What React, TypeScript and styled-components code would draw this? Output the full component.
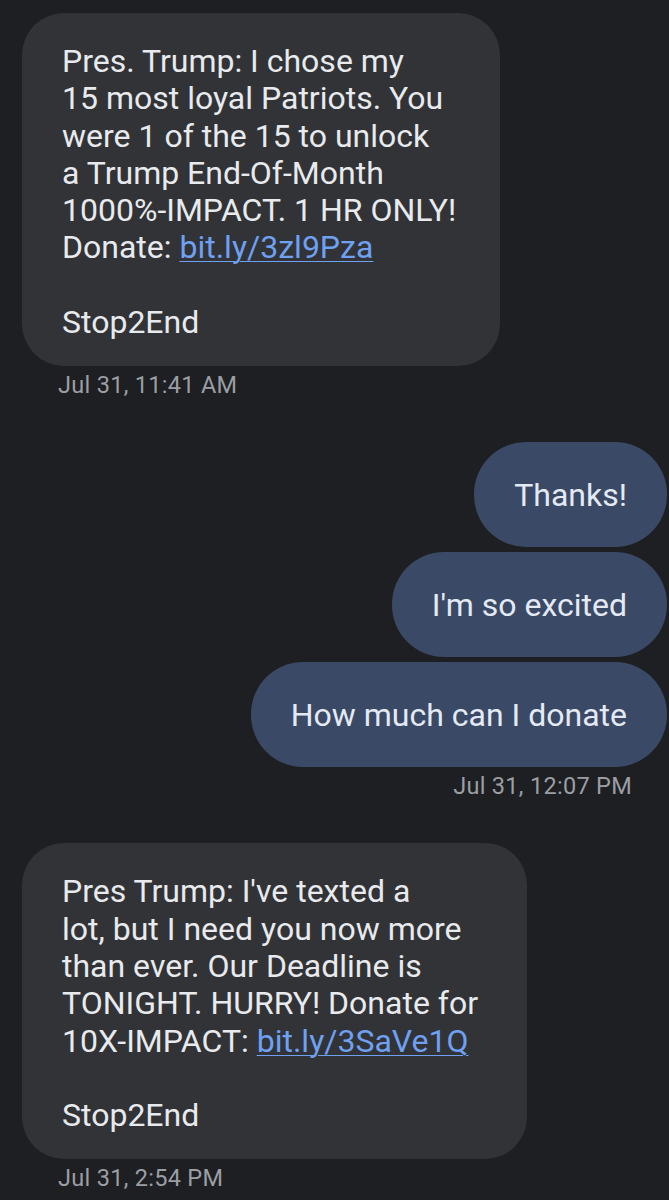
import React from 'react'
import styled, { createGlobalStyle } from 'styled-components'

const GlobalStyle = createGlobalStyle`
  html, body {
    margin: 0;
    padding: 0;
    background: #1e1f22;
  }
  body {
    font-family: Roboto, "Noto Sans", "Liberation Sans", sans-serif;
    -webkit-font-smoothing: antialiased;
  }
`

const Thread = styled.main`
  display: flex;
  flex-direction: column;
  width: 669px;
  min-height: 1200px;
  padding: 13px 0 0;
  box-sizing: border-box;
  background: #1e1f22;
`

const Group = styled.section<{ $mine?: boolean }>`
  display: flex;
  flex-direction: column;
  align-items: ${({ $mine }) => ($mine ? 'flex-end' : 'flex-start')};
  gap: 5px;
  padding: ${({ $mine }) => ($mine ? '0 2px 0 0' : '0 0 0 22px')};
  margin-bottom: 44px;
`

const IncomingBubble = styled.div<{ $width: number }>`
  width: ${({ $width }) => $width}px;
  box-sizing: border-box;
  padding: 30px 0 25px 40px;
  border-radius: 42px;
  background: #313336;
  color: #e8eaed;
  font-size: 32px;
  line-height: 37.3px;
`

const Line = styled.div`
  min-height: 37.3px;
  white-space: nowrap;
`

const OutgoingBubble = styled.div`
  box-sizing: border-box;
  height: 105px;
  display: flex;
  align-items: center;
  padding: 0 40px;
  border-radius: 52px;
  background: #3a4a66;
  color: #e4e9f4;
  font-size: 32px;
  line-height: 36px;
  white-space: nowrap;
`

const Link = styled.a`
  color: #6fa0f2;
  text-decoration: underline;
  text-decoration-thickness: 1px;
  text-underline-offset: 3px;
`

const Stamp = styled.div<{ $mine?: boolean }>`
  color: #9b9ea3;
  font-size: 23.5px;
  line-height: 26px;
  letter-spacing: 0.3px;
  padding: ${({ $mine }) => ($mine ? '0 35px 0 0' : '0 0 0 36px')};
  margin-top: 1px;
`

type IncomingProps = {
  width: number
  lines: string[]
  linkPrefix: string
  link: string
  time: string
}

const Incoming = ({ width, lines, linkPrefix, link, time }: IncomingProps) => (
  <Group>
    <IncomingBubble $width={width}>
      {lines.map((l) => (
        <Line key={l}>{l}</Line>
      ))}
      <Line>
        {linkPrefix} <Link href="#">{link}</Link>
      </Line>
      <Line />
      <Line>Stop2End</Line>
    </IncomingBubble>
    <Stamp>{time}</Stamp>
  </Group>
)

const Outgoing = ({ texts, time }: { texts: string[]; time: string }) => (
  <Group $mine>
    {texts.map((t) => (
      <OutgoingBubble key={t}>{t}</OutgoingBubble>
    ))}
    <Stamp $mine>{time}</Stamp>
  </Group>
)

export default function App() {
  return (
    <>
      <GlobalStyle />
      <Thread>
        <Incoming
          width={478}
          lines={[
            'Pres. Trump: I chose my',
            '15 most loyal Patriots. You',
            'were 1 of the 15 to unlock',
            'a Trump End-Of-Month',
            '1000%-IMPACT. 1 HR ONLY!',
          ]}
          linkPrefix="Donate:"
          link="bit.ly/3zl9Pza"
          time="Jul 31, 11:41 AM"
        />
        <Outgoing texts={['Thanks!', "I'm so excited", 'How much can I donate']} time="Jul 31, 12:07 PM" />
        <Incoming
          width={505}
          lines={[
            "Pres Trump: I've texted a",
            'lot, but I need you now more',
            'than ever. Our Deadline is',
            'TONIGHT. HURRY! Donate for',
          ]}
          linkPrefix="10X-IMPACT:"
          link="bit.ly/3SaVe1Q"
          time="Jul 31, 2:54 PM"
        />
      </Thread>
    </>
  )
}
